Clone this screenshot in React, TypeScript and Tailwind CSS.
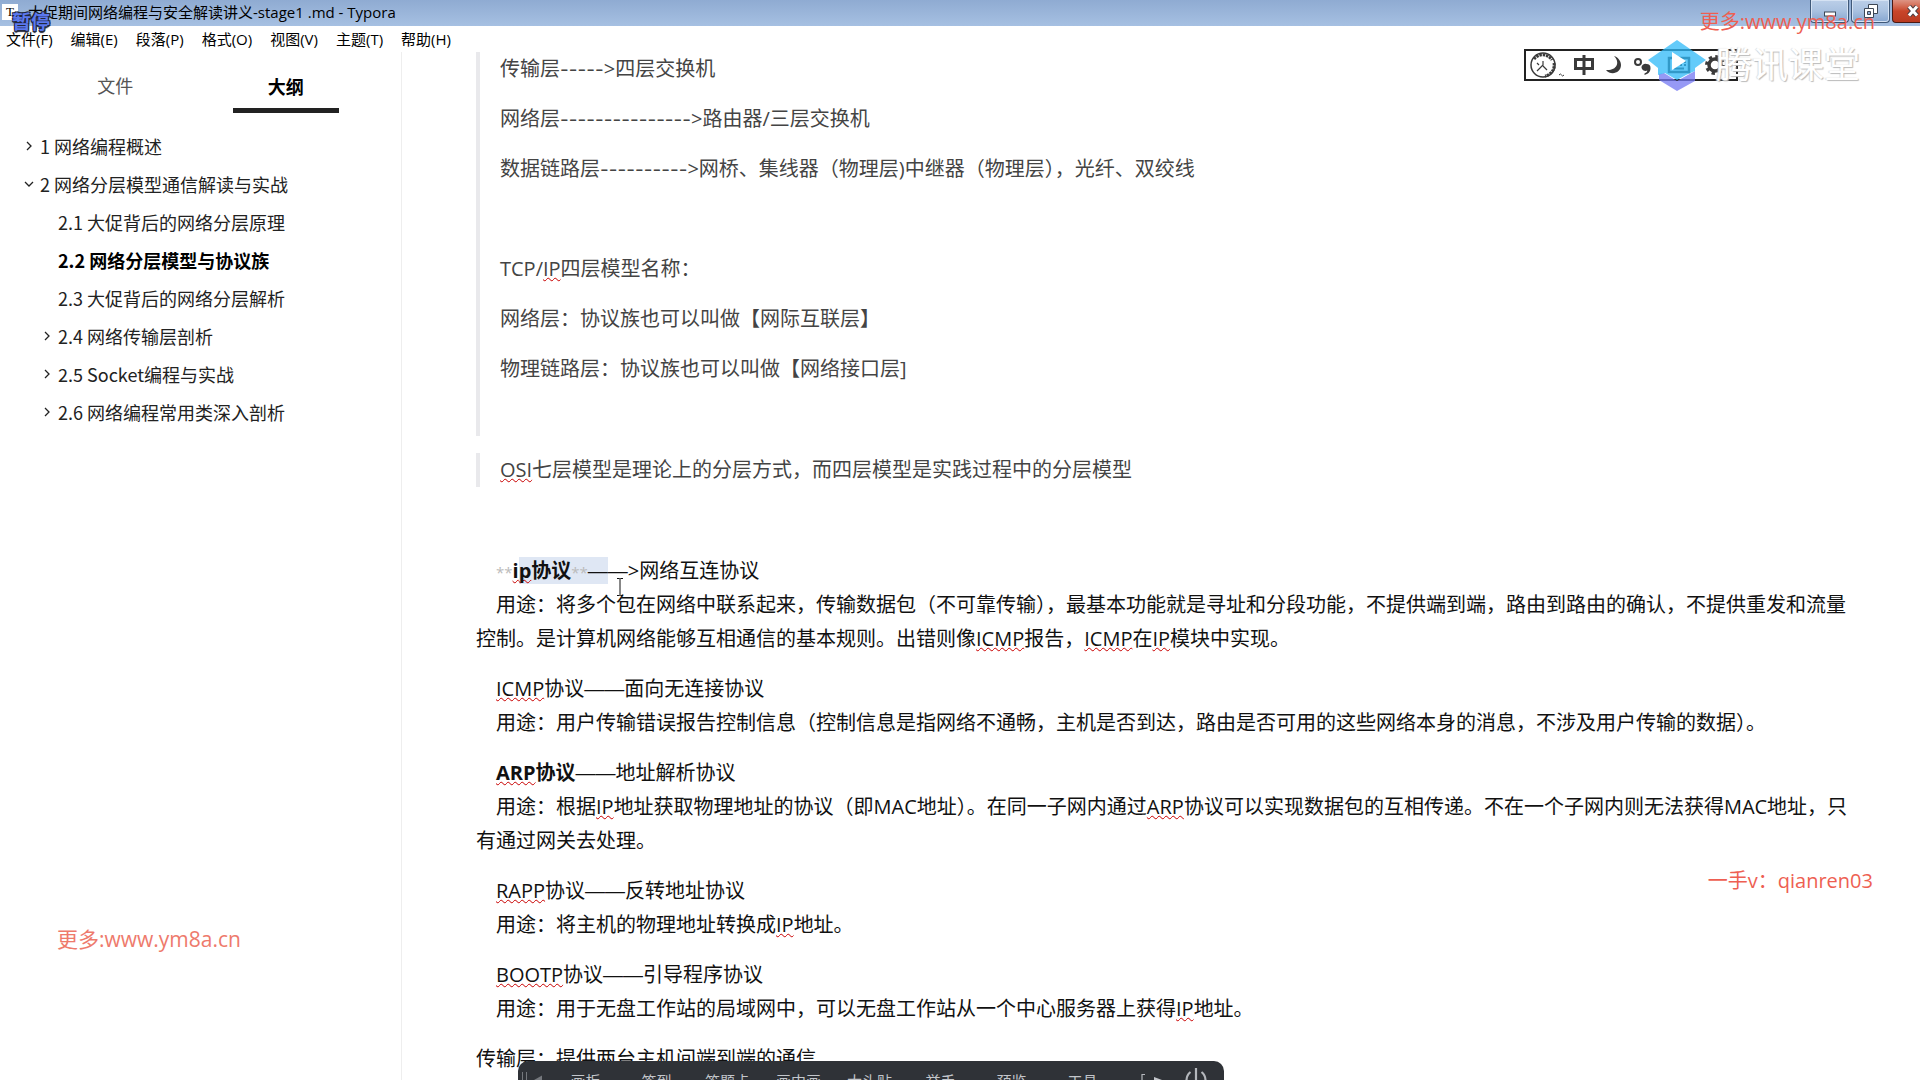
import type { ReactNode } from "react";

const menus = ["文件(F)", "编辑(E)", "段落(P)", "格式(O)", "视图(V)", "主题(T)", "帮助(H)"];

const outline = [
  { text: "1 网络编程概述", level: 1, arrow: "right" },
  { text: "2 网络分层模型通信解读与实战", level: 1, arrow: "down" },
  { text: "2.1 大促背后的网络分层原理", level: 2, arrow: "" },
  { text: "2.2 网络分层模型与协议族", level: 2, arrow: "", active: true },
  { text: "2.3 大促背后的网络分层解析", level: 2, arrow: "" },
  { text: "2.4 网络传输层剖析", level: 2, arrow: "right" },
  { text: "2.5 Socket编程与实战", level: 2, arrow: "right" },
  { text: "2.6 网络编程常用类深入剖析", level: 2, arrow: "right" },
];

const tools = ["画板", "签到", "答题卡", "画中画", "大头贴", "举手", "预览", "工具"];

function Arrow({ dir }: { dir: string }) {
  return (
    <svg viewBox="0 0 10 10" className="h-2.5 w-2.5 shrink-0" fill="none" stroke="#222" strokeWidth="1.3">
      {dir === "right" && <path d="M3 1l4 4-4 4" />}
      {dir === "down" && <path d="M1 3l4 4 4-4" />}
    </svg>
  );
}

// misspelled word
function Sp({ children }: { children: ReactNode }) {
  return (
    <span className="underline decoration-[#c80000] decoration-wavy decoration-1 underline-offset-1 [text-decoration-skip-ink:none]">
      {children}
    </span>
  );
}

function Dash({ n = 2 }: { n?: number }) {
  return <span className="font-['Liberation_Sans',sans-serif] leading-none">{"—".repeat(n)}</span>;
}

function Hyphens({ n }: { n: number }) {
  return <span className="font-['Inter',sans-serif] text-[19px] leading-none">{"-".repeat(n)}</span>;
}

function TitleBar() {
  return (
    <header className="relative flex h-[26px] shrink-0 items-center justify-between bg-linear-to-b from-[#8fabd2] to-[#a6c0e2]">
      <div className="flex items-center gap-2 self-start pl-0.5">
        <span className="flex h-4 w-4 items-center justify-center bg-white font-['Liberation_Serif',serif] text-[13px] text-black">
          T
        </span>
        <h1 className="pl-0.5 text-[15px] leading-6 text-black">大促期间网络编程与安全解读讲义-stage1 .md - Typora</h1>
      </div>
      <div className="flex gap-0.5 self-start">
        <button
          aria-label="最小化"
          className="flex h-[23px] w-[39px] items-center justify-center rounded-b-sm border border-t-0 border-[#3f5878] bg-linear-to-b from-[#bccfe8] via-[#a9c1e0] to-[#86a6d0] shadow-[inset_0_0_0_1px_#d5e2f3]"
        >
          <svg viewBox="0 0 14 14" className="h-3.5 w-3.5">
            <rect x="1.5" y="8" width="11" height="4" fill="#fff" stroke="#3c4654" />
          </svg>
        </button>
        <button
          aria-label="还原"
          className="flex h-[23px] w-[39px] items-center justify-center rounded-b-sm border border-t-0 border-[#3f5878] bg-linear-to-b from-[#bccfe8] via-[#a9c1e0] to-[#86a6d0] shadow-[inset_0_0_0_1px_#d5e2f3]"
        >
          <svg viewBox="0 0 16 16" className="h-4 w-4" fill="#fff" stroke="#3c4654">
            <path d="M5.500 1.500h9v9h-9z" />
            <path d="M1.500 5.500h9v9h-9z" />
            <path d="M4.500 8.500h3v3h-3z" fill="#8fabd2" />
          </svg>
        </button>
        <button
          aria-label="关闭"
          className="flex h-[23px] w-7 items-center justify-end rounded-bl-sm border border-t-0 border-r-0 border-[#4a1a14] bg-linear-to-b from-[#dd9484] via-[#c9452a] to-[#b93a20]"
        >
          <svg viewBox="0 0 14 12" className="h-3 w-3.5">
            <path d="M3 1.500l8 9M11 1.500l-8 9" stroke="#4a3c40" strokeWidth="5" />
            <path d="M3 1.500l8 9M11 1.500l-8 9" stroke="#fff" strokeWidth="3" />
          </svg>
        </button>
      </div>
      <span className="absolute top-2 left-3 z-10 text-[19px] leading-7 font-bold text-[#5b78ee] [text-shadow:1px_1px_0_#22283c,-1px_-1px_0_#22283c,1px_-1px_0_#22283c,-1px_1px_0_#22283c,0_2px_1px_#22283c]">
        暂停
      </span>
    </header>
  );
}

function ImeBar() {
  return (
    <div className="absolute top-[49px] right-[182px] flex h-8 w-[214px] items-center border-2 border-[#222] bg-white">
      <svg viewBox="0 0 214 32" className="-m-0.5 h-8 w-[214px] shrink-0" fill="none" stroke="#3a3a3a">
        <circle cx="19" cy="16" r="12" strokeWidth="1.500" />
        <path d="M10 10a11 11 0 0 1 18 1M30 14a11 11 0 0 1-9 13" strokeWidth="3" strokeDasharray="2.500 0.800" />
        <path d="M19 12v4l-6 6M19 17l4 4M13 14l2 2" strokeWidth="1.200" />
        <path d="M35 26q1.500-2 2.500 0t2.500 0" />
        <path d="M51.500 10.500h17v9h-17zM60 6v20" strokeWidth="3" />
        <path d="M90 7c7 7 2 15-8 14 5 6 15 3 15-5 0-4-3-8-7-9z" fill="#3a3a3a" stroke="none" />
        <circle cx="114" cy="13" r="3" strokeWidth="2" />
        <path d="M122.500 15a4 4 0 0 1 4 4c0 4-2.500 6-6 7v-1.500c2-.8 2.800-1.800 2.800-3a4 3.500 0 1 1-.8-6.500z" fill="#3a3a3a" stroke="none" />
        <rect x="145" y="9" width="20" height="14" strokeWidth="2.500" />
        <path d="M148 13h2m2 0h2m2 0h2m2 0h2M148 16h2m2 0h2m2 0h2m2 0h2M150 19.500h10" strokeWidth="2" />
        <circle cx="191" cy="16" r="6" strokeWidth="3.500" />
        <circle cx="191" cy="16" r="8.500" strokeWidth="3" strokeDasharray="3.340 3.340" />
      </svg>
    </div>
  );
}

function Brand() {
  return (
    <div className="absolute top-[38px] right-[60px] flex items-center gap-2.5">
      <svg viewBox="0 0 58 54" className="h-[54px] w-[58px]">
        <path d="M11 36l5-1 13 8 9-5 9-5v10L29 53 11 42z" fill="#7377f2" opacity="0.750" />
        <path d="M29 2l29 20-11 8v3l-9 4-9 5-12-7-7 2V30L0 22z" fill="#2fbaf8" opacity="0.750" />
        <path d="M24 14l14 9-14 9z" fill="#fff" />
      </svg>
      <span className="text-[36px] leading-[54px] text-white [text-shadow:1px_1px_1px_#bbb,-1px_0_1px_#ddd]">腾讯课堂</span>
    </div>
  );
}

function Sidebar() {
  return (
    <aside className="w-[402px] shrink-0 border-r border-[#eee] px-[30px] pt-[17px] font-['Noto_Sans_CJK_SC',sans-serif] text-[18px] text-[#222]">
      <div role="tablist" className="grid grid-cols-2">
        <button role="tab" aria-selected="false" className="justify-self-center pb-3 leading-8 text-[#555]">
          文件
        </button>
        <button
          role="tab"
          aria-selected="true"
          className="w-[106px] justify-self-center border-b-5 border-[#222] pb-[5px] leading-8 font-bold text-black"
        >
          大纲
        </button>
      </div>
      <ul className="-ml-1.5 pt-3.5">
        {outline.map((o) => (
          <li key={o.text} className={o.level === 2 ? "pl-[18px]" : ""}>
            <a
              href="#"
              className={`flex items-center gap-1.5 leading-[38px] whitespace-nowrap ${o.active ? "font-bold text-black" : ""}`}
            >
              <Arrow dir={o.arrow} />
              {o.text}
            </a>
          </li>
        ))}
      </ul>
    </aside>
  );
}

function Editor() {
  return (
    <main className="relative min-w-0 flex-1 pr-[68px] pl-[74px] text-[20px] leading-[34px] text-[#111]">
      <blockquote className="flex flex-col gap-4 border-l-4 border-[#e9e9ec] pl-5 text-[#444]">
        <p>传输层<Hyphens n={5} />&gt;四层交换机</p>
        <p>网络层<Hyphens n={15} />&gt;路由器/三层交换机</p>
        <p>数据链路层<Hyphens n={10} />&gt;网桥、集线器（物理层)中继器（物理层），光纤、双绞线</p>
        <p>&nbsp;</p>
        <p>TCP/<Sp>IP</Sp>四层模型名称：</p>
        <p>网络层：协议族也可以叫做【网际互联层】</p>
        <p>物理链路层：协议族也可以叫做【网络接口层]</p>
        <p>&nbsp;</p>
      </blockquote>
      <blockquote className="mt-[17px] border-l-4 border-[#e9e9ec] pl-5 text-[#444]">
        <p><Sp>OSI</Sp>七层模型是理论上的分层方式，而四层模型是实践过程中的分层模型</p>
      </blockquote>

      <div className="mt-[67px] flex flex-col gap-4">
        <section>
          <p className="relative indent-5">
            <span className="text-[15px] leading-none text-[#bbb]">**</span>
            <b><Sp>i</Sp></b>
            <span className="bg-[#dfe7f4]">
              <b><Sp>p</Sp>协议</b>
              <span className="text-[15px] leading-none text-[#bbb]">**</span>
              <Dash n={1} />
            </span>
            <Dash n={1} />
            &gt;网络互连协议
            <svg viewBox="0 0 8 18" className="absolute top-6 left-[140px] h-[18px] w-2" fill="none" stroke="#111">
              <path d="M1 .5h2.500l.5.5.500-.5H7M4 1v16M1 17.500h2.500l.5-.5.500.5H7" />
            </svg>
          </p>
          <p className="indent-5">
            用途：将多个包在网络中联系起来，传输数据包（不可靠传输），最基本功能就是寻址和分段功能，不提供端到端，路由到路由的确认，不提供重发和流量控制。是计算机网络能够互相通信的基本规则。出错则像<Sp>ICMP</Sp>报告，<Sp>ICMP</Sp>在<Sp>IP</Sp>模块中实现。
          </p>
        </section>
        <section>
          <p className="indent-5"><Sp>ICMP</Sp>协议<Dash />面向无连接协议</p>
          <p className="indent-5">
            用途：用户传输错误报告控制信息（控制信息是指网络不通畅，主机是否到达，路由是否可用的这些网络本身的消息，不涉及用户传输的数据）。
          </p>
        </section>
        <section>
          <p className="indent-5"><b><Sp>ARP</Sp>协议</b><Dash />地址解析协议</p>
          <p className="indent-5">
            用途：根据<Sp>IP</Sp>地址获取物理地址的协议（即MAC地址）。在同一子网内通过<Sp>ARP</Sp>协议可以实现数据包的互相传递。不在一个子网内则无法获得MAC地址，只有通过网关去处理。
          </p>
        </section>
        <section>
          <p className="indent-5"><Sp>RAPP</Sp>协议<Dash />反转地址协议</p>
          <p className="indent-5">用途：将主机的物理地址转换成<Sp>IP</Sp>地址。</p>
        </section>
        <section>
          <p className="indent-5"><Sp>BOOTP</Sp>协议<Dash />引导程序协议</p>
          <p className="indent-5">
            用途：用于无盘工作站的局域网中，可以无盘工作站从一个中心服务器上获得<Sp>IP</Sp>地址。
          </p>
        </section>
        <p>传输层：提供两台主机间端到端的通信</p>
      </div>
    </main>
  );
}

function ClassToolbar() {
  return (
    <div className="absolute bottom-0 left-[518px] flex h-[19px] w-[706px] items-start overflow-hidden rounded-t-[10px] bg-[#2f3237] text-[15px] text-[#c3c6cb]">
      <svg viewBox="0 0 32 19" className="h-[19px] w-8 shrink-0">
        <path d="M4.500 11v8M8.500 11v8" stroke="#75787d" />
        <path d="M24 14.500v4.500h-8z" fill="#75787d" />
      </svg>
      {tools.map((t) => (
        <button key={t} className="w-[71px] shrink-0 pt-2 leading-6 whitespace-nowrap">
          {t}
        </button>
      ))}
      <svg viewBox="0 0 106 19" className="h-[19px] w-[106px] shrink-0" fill="none" stroke="#b4b7bc">
        <path d="M24 19v-5.500h3" strokeWidth="1.200" />
        <path d="M36 16l8 3h-8z" fill="#c3c6cb" stroke="none" />
        <path d="M78 7v12M72.500 11a10.500 10.500 0 0 0-4 8M83.500 11a10.500 10.500 0 0 1 4 8" strokeWidth="2.200" />
      </svg>
    </div>
  );
}

export default function App() {
  return (
    <div className="relative flex h-screen flex-col overflow-hidden bg-white font-['Open_Sans','Noto_Sans_CJK_SC',sans-serif]">
      <TitleBar />
      <nav className="flex h-[26px] shrink-0 items-center gap-[18px] pl-1.5 text-[15px] text-black">
        {menus.map((m) => (
          <button key={m} className="leading-6">
            {m}
          </button>
        ))}
      </nav>
      <div className="flex min-h-0 flex-1">
        <Sidebar />
        <Editor />
      </div>

      <ImeBar />
      <Brand />
      <span className="absolute top-1.5 right-[45px] text-[20px] leading-8 text-[#ee5f52]">更多:www.ym8a.cn</span>
      <span className="absolute right-[47px] bottom-[183px] text-[20px] leading-8 text-[#ee5f52]">一手v：qianren03</span>
      <span className="absolute bottom-[125px] left-[57px] text-[21px] leading-8 text-[#ee7a6c]">更多:www.ym8a.cn</span>
      <ClassToolbar />
    </div>
  );
}
